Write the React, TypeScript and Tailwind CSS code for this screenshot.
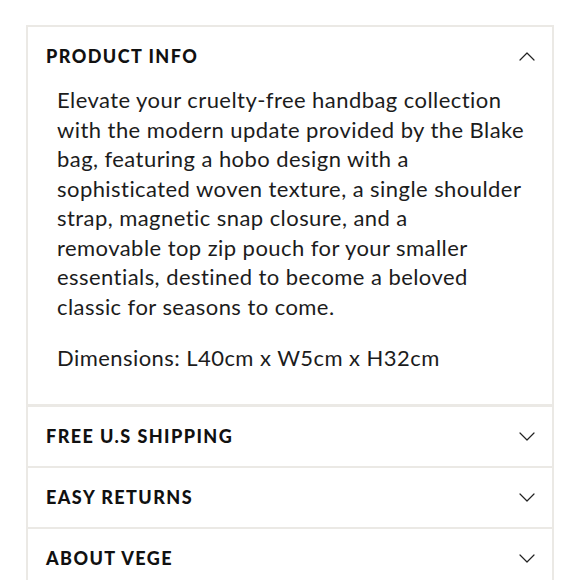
import { useState } from "react"

const sections = [
	{ id: "info", title: "Product Info" },
	{ id: "shipping", title: "Free U.S Shipping" },
	{ id: "returns", title: "Easy Returns" },
	{ id: "about", title: "About Vege" },
]

// line breaks kept as in the product page
const description = [
	"Elevate your cruelty-free handbag collection",
	"with the modern update provided by the Blake",
	"bag, featuring a hobo design with a",
	"sophisticated woven texture, a single shoulder",
	"strap, magnetic snap closure, and a",
	"removable top zip pouch for your smaller",
	"essentials, destined to become a beloved",
	"classic for seasons to come.",
]

function Chevron({ open }: { open: boolean }) {
	return (
		<svg width="16" height="9" viewBox="0 0 16 9" fill="none" className={open ? "rotate-180" : ""}>
			<path d="M1 1l7 7 7-7" stroke="#222" strokeWidth="1.2" strokeLinecap="round" strokeLinejoin="round" />
		</svg>
	)
}

export default function App() {
	const [open, setOpen] = useState("info")

	return (
		<div className="min-h-[580px] bg-white pl-[26px] pr-[26px] pt-[25px] font-['Lato','Liberation_Sans',sans-serif] text-[#111]">
			<div className="border-x-2 border-t-2 border-[#ebe9e5]">
				{sections.map((s, i) => (
					<div key={s.id} className={i === 0 ? "border-b-[3px] border-[#ebe9e5]" : "border-b-2 border-[#ebe9e5]"}>
						<button
							onClick={() => setOpen(open === s.id ? "" : s.id)}
							className="flex h-[59px] w-full items-center justify-between pl-[18px] pr-[17px] text-left"
						>
							<span className="text-[18px] font-black uppercase tracking-[0.08em]">{s.title}</span>
							<Chevron open={open === s.id} />
						</button>
						{open === s.id && s.id === "info" && (
							<div className="-mt-px pb-[31px] pl-[29px] pr-[10px] text-[22px] leading-[29.5px] tracking-[0.02em] text-[#1c1c1c]">
								<p>
									{description.map((line, j) => (
										<span key={j}>
											{line}
											{j < description.length - 1 && <br />}
										</span>
									))}
								</p>
								<p className="mt-[22px]">Dimensions: L40cm x W5cm x H32cm</p>
							</div>
						)}
					</div>
				))}
			</div>
		</div>
	)
}
